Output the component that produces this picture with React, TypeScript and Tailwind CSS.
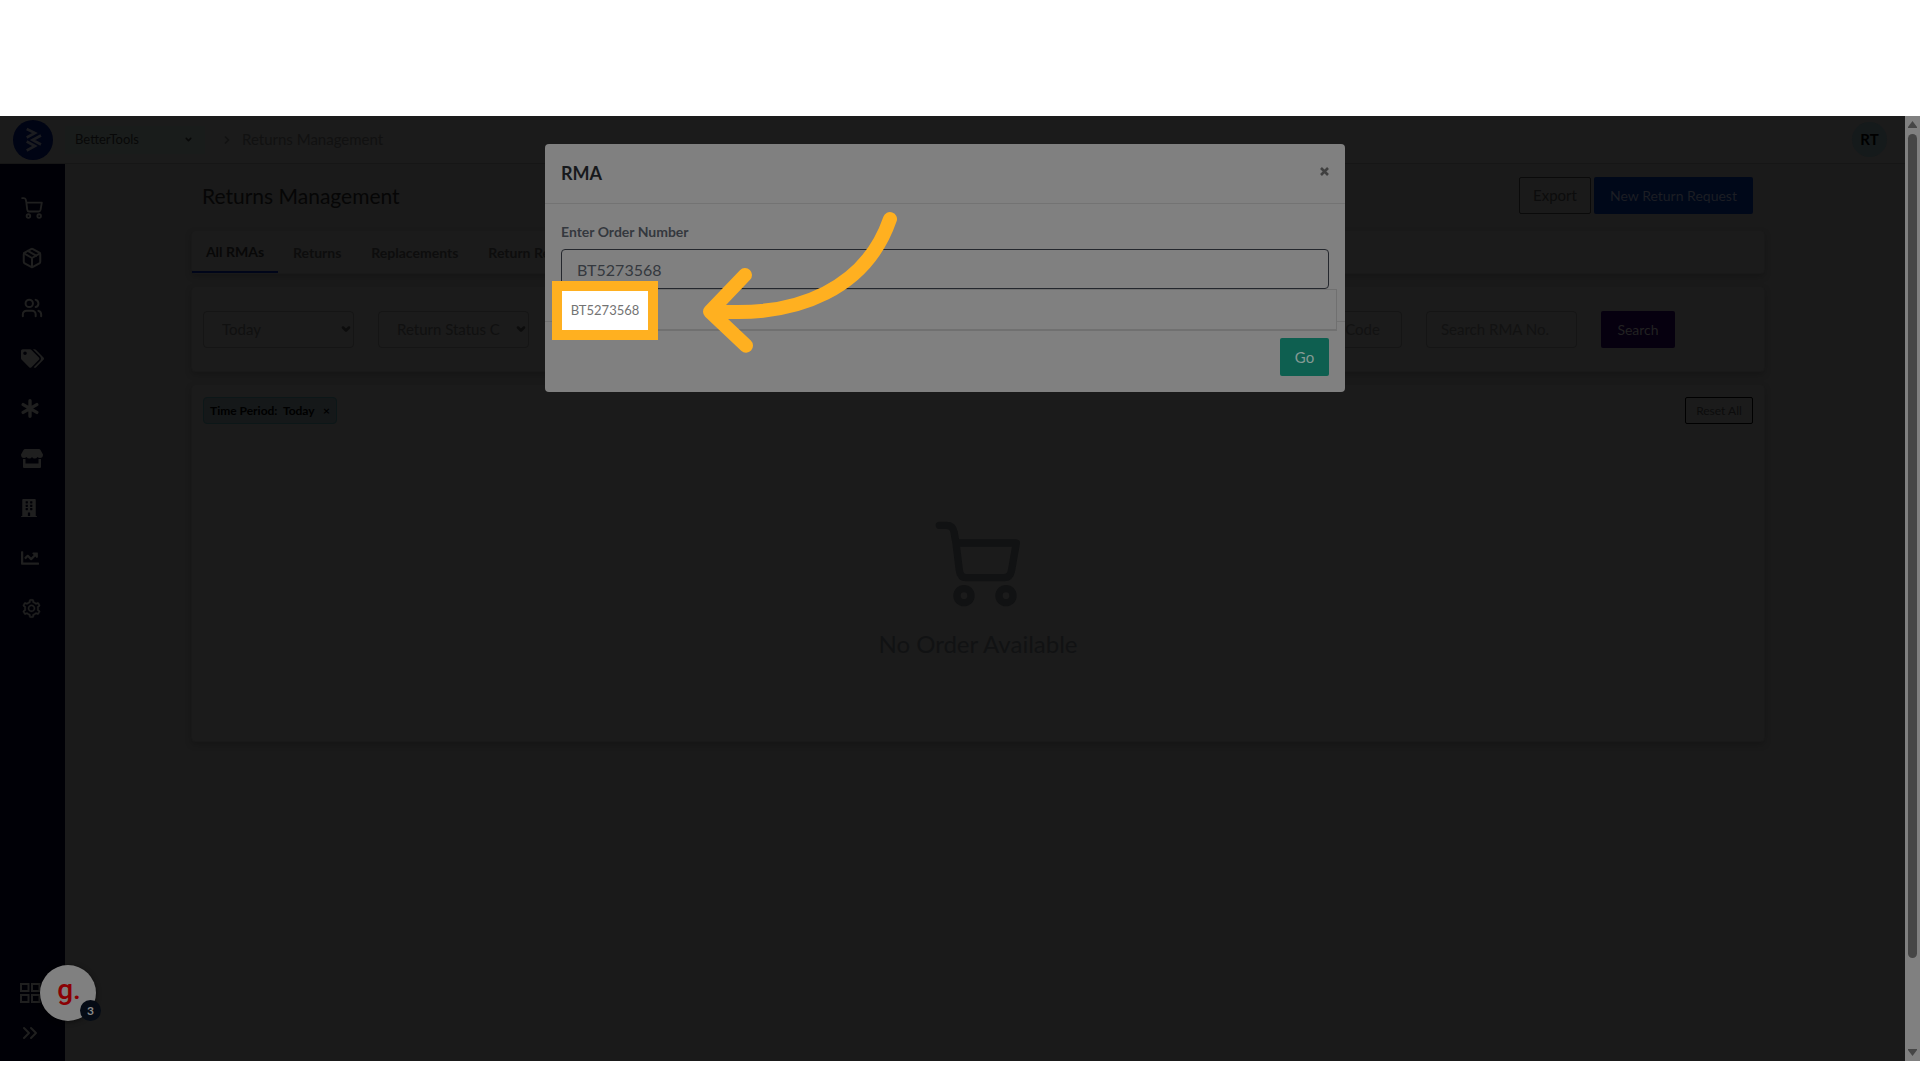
import type { ReactNode } from "react";
import { Package, Users, ChevronDown, ChevronRight, ChevronsRight } from "lucide-react";
import { FaTags, FaBuilding, FaChartLine } from "react-icons/fa";
import { AiOutlineSetting } from "react-icons/ai";

function CartIcon({ className }: { className: string }) {
  return (
    <svg viewBox="284 95 258 258" className={className} fill="none" stroke="currentColor" strokeWidth="22" strokeLinecap="round" strokeLinejoin="round" aria-hidden="true">
      <path d="M297 108H318Q338 108 341 128L347 161L357 243Q360 265 377 265H492Q509 265 513 246L528 161H347" />
      <circle cx="371" cy="319" r="21" />
      <circle cx="497" cy="319" r="21" />
    </svg>
  );
}

function AsteriskIcon() {
  return (
    <svg viewBox="0 0 18 19" className="h-[19px] w-[18px]" fill="none" stroke="currentColor" strokeWidth="3.4" strokeLinecap="round" aria-hidden="true">
      <path d="M9 1.800V17.200M2.200 5.600L15.800 13.400M15.800 5.600L2.200 13.400" />
    </svg>
  );
}

function StoreIcon() {
  return (
    <svg viewBox="0 0 22 19" className="h-[19px] w-[22px]" fill="currentColor" aria-hidden="true">
      <path d="M4 0H18Q19 0 19.500 1L22 5.500Q22 9 19 9Q17.500 9 16.500 8Q15.500 9.500 13.700 9.500Q12 9.500 11 8Q10 9.500 8.300 9.500Q6.500 9.500 5.500 8Q4.500 9 3 9Q0 9 0 5.500L2.500 1Q3 0 4 0Z" />
      <path d="M2 10H4.500V14.500H17.500V10H20V18Q20 19 19 19H3Q2 19 2 18Z" />
    </svg>
  );
}

function Logo() {
  return (
    <svg viewBox="0 0 40 40" className="size-10" aria-hidden="true">
      <circle cx="20" cy="20" r="20" fill="#000414" />
      <g fill="none" stroke="#1b1c20" strokeWidth="2.6">
        <path d="M13.700 9L22 13L13.700 17.500" />
        <path d="M28 15.500L19.500 20L28 24.500" />
        <path d="M13.700 21.500L22 26L13.700 30.500" />
      </g>
    </svg>
  );
}

function AppsIcon() {
  return (
    <svg viewBox="0 0 21 20" className="h-5 w-[21px]" fill="none" stroke="currentColor" strokeWidth="2" aria-hidden="true">
      <path d="M1 1H8.500V8H1ZM12 1H19.500V8H12ZM1 12H8.500V19H1ZM12 12H19.500V19H12Z" />
    </svg>
  );
}

const navItems: { label: string; icon: ReactNode }[] = [
  { label: "Orders", icon: <CartIcon className="size-[22px]" /> },
  { label: "Products", icon: <Package className="size-[22px]" strokeWidth={2.2} /> },
  { label: "Customers", icon: <Users className="size-[22px]" strokeWidth={2.2} /> },
  { label: "Offers", icon: <FaTags className="size-[23px]" /> },
  { label: "Integrations", icon: <AsteriskIcon /> },
  { label: "Store", icon: <StoreIcon /> },
  { label: "Company", icon: <FaBuilding className="h-[18px] w-4" /> },
  { label: "Reports", icon: <FaChartLine className="size-[18px]" /> },
  { label: "Settings", icon: <AiOutlineSetting className="size-[21px]" strokeWidth={20} /> },
];

function Sidebar() {
  return (
    <nav className="flex w-[65px] shrink-0 flex-col bg-[#000006] pt-[19px] pb-4 text-[#1f1f1f]">
      {navItems.map((item) => (
        <a key={item.label} href="#" aria-label={item.label} className="flex h-[50px] items-center pl-[21px]">
          {item.icon}
        </a>
      ))}
      <a href="#" aria-label="Apps" className="mt-auto pl-5">
        <AppsIcon />
      </a>
      <button type="button" aria-label="Expand menu" className="mt-[18px] pl-[18px]">
        <ChevronsRight className="size-6" />
      </button>
    </nav>
  );
}

function TopBar() {
  return (
    <header className="flex h-12 items-center border-b border-[#161616] bg-[#1b1b1b] pr-[18px] pl-[13px]">
      <a href="#" aria-label="Home">
        <Logo />
      </a>
      <button type="button" className="ml-3 flex h-7 w-[140px] items-center justify-between bg-[#191c1b] pr-3 pl-[10px] text-[13px] text-[#080808]">
        BetterTools
        <ChevronDown className="size-[9px]" strokeWidth={4} />
      </button>
      <ChevronRight className="ml-4 size-3 text-[#121212]" strokeWidth={3} />
      <span className="ml-[9px] text-[15px] text-[#111111]">Returns Management</span>
      <button type="button" className="ml-auto size-[35px] rounded-full bg-[#151a1b] text-[15px] font-bold text-black">
        RT
      </button>
    </header>
  );
}

function FilterSelect({ label, value }: { label: string; value: string }) {
  return (
    <div className="relative w-[151px]">
      <select aria-label={label} className="h-[37px] w-full appearance-none rounded border border-[#151515] bg-transparent pl-[18px] text-[15px] text-[#101010]">
        <option>{value}</option>
      </select>
      <ChevronDown className="pointer-events-none absolute top-3 right-[2px] size-3 text-[#0c0c0c]" strokeWidth={5} />
    </div>
  );
}

function FilterInput({ placeholder }: { placeholder: string }) {
  return (
    <input aria-label={placeholder} placeholder={placeholder} className="h-[37px] w-[151px] rounded border border-[#151515] bg-transparent px-[14px] text-[15px] placeholder:text-[#121212]" />
  );
}

const card = "rounded border border-[#191919] bg-[#1b1b1b] shadow-[0_3px_6px_rgba(0,0,0,0.18)]";

function Main() {
  return (
    <main className="min-w-0 flex-1 bg-[#1a1a1a] pr-[140px] pl-[126px]">
      <div className="flex h-[66px] items-start pt-[13px] pr-3 pl-[11px]">
        <h1 className="pt-[3px] text-[21px] leading-[32px] text-[#060606]">Returns Management</h1>
        <button type="button" className="ml-auto h-[37px] w-[72px] rounded-xs border border-[#0a0a0a] text-[15px] text-[#0c0c0c]">
          Export
        </button>
        <button type="button" className="ml-[3px] h-[37px] w-[159px] rounded-xs bg-[#000819] text-[14px] text-[#1c1e24]">
          New Return Request
        </button>
      </div>

      <div className={`${card} flex h-11 text-[14px] font-bold text-[#0d0d0d]`}>
        <a href="#" className="flex w-[86px] items-center justify-center border-b-2 border-[#000519] text-[#080808]">All RMAs</a>
        <a href="#" className="ml-[15px] flex items-center">Returns</a>
        <a href="#" className="ml-[30px] flex items-center">Replacements</a>
        <a href="#" className="ml-[30px] flex items-center">Return Requests</a>
      </div>

      <form className={`${card} mt-3 flex h-[86px] items-center justify-between pr-[89px] pl-[11px]`}>
        <div className="flex gap-6">
          <FilterSelect label="Time period" value="Today" />
          <FilterSelect label="Return status" value="Return Status C" />
        </div>
        <div className="flex gap-6">
          <FilterInput placeholder="Search Pick Code" />
          <FilterInput placeholder="Search RMA No." />
          <button type="button" className="h-[37px] w-[74px] rounded-xs bg-[#06000f] text-[14px] text-[#222222]">Search</button>
        </div>
      </form>

      <section className={`${card} mt-3 h-[358px] px-[11px] pt-3`}>
        <div className="flex items-start justify-between">
          <div className="flex h-[27px] w-[134px] items-center justify-between rounded border border-[#0c1718] bg-[#151819] px-[6px] text-[12px] font-bold text-black">
            <span className="whitespace-pre">Time Period:  Today</span>
            <button type="button" aria-label="Remove filter">×</button>
          </div>
          <button type="button" className="h-[27px] w-[68px] rounded-xs border border-black text-[12px] text-[#0c0c0c]">Reset All</button>
        </div>
        <div className="mt-[97px] flex flex-col items-center text-[#111213]">
          <CartIcon className="size-[86px]" />
          <p className="mt-[19px] text-[24px] leading-[36px]">No Order Available</p>
        </div>
      </section>
    </main>
  );
}

function ScrollBar() {
  return (
    <div className="flex w-[15px] shrink-0 flex-col items-center bg-[#808080] py-[5px] text-[#464646]" aria-hidden="true">
      <svg viewBox="0 0 9 7" className="h-[7px] w-[9px]" fill="currentColor"><path d="M4.500 0L9 6V7H0V6Z" /></svg>
      <div className="mt-[6px] mb-[91px] w-[9px] flex-1 rounded-full bg-[#464646]" />
      <svg viewBox="0 0 9 7" className="h-[7px] w-[9px]" fill="currentColor"><path d="M4.500 7L9 1V0H0V1Z" /></svg>
    </div>
  );
}

function RmaDialog() {
  return (
    <div className="absolute inset-x-0 top-0 flex justify-center pt-7 pr-[30px]">
      <div role="dialog" aria-labelledby="rma-title" className="relative w-[800px] rounded bg-[#808080]">
        <div className="flex h-[60px] items-center justify-between border-b border-[#737373] px-4">
          <h2 id="rma-title" className="text-[18px] font-bold text-[#17191c]">RMA</h2>
          <button type="button" aria-label="Close" className="pb-1 text-[#404040]">
            <svg viewBox="0 0 9 9" className="size-[9px]" stroke="currentColor" strokeWidth="2.600" aria-hidden="true">
              <path d="M1 1L8 8M8 1L1 8" />
            </svg>
          </button>
        </div>
        <div className="relative h-[118px] border-b border-[#737373] px-4 pt-4">
          <label htmlFor="order-number" className="block h-[29px] text-[14px] leading-[23px] font-bold text-[#34383e]">Enter Order Number</label>
          <input id="order-number" defaultValue="BT5273568" className="h-10 w-full rounded border border-[#24272d] bg-transparent px-[15px] text-base text-[#34383e]" />
          <ul className="absolute top-[85px] right-2 left-4 h-[42px] border border-b-2 border-[#707070] bg-[#808080]">
            <li className="absolute -top-[9px] -left-[10px] h-[59px] w-[106px] border-[10px] border-[#ffb020] bg-white">
              <button type="button" className="h-full w-full text-[13px] text-[#737373]">BT5273568</button>
            </li>
          </ul>
        </div>
        <div className="flex justify-end p-4">
          <button type="button" className="h-[38px] w-[49px] rounded-xs bg-[#0e5f50] text-[15px] text-[#859a95]">Go</button>
        </div>
        <svg viewBox="660 270 600 435" className="pointer-events-none absolute top-[66px] left-[155px] h-[145px] w-[200px]" fill="none" stroke="#ffb020" strokeWidth="42" strokeLinecap="round" strokeLinejoin="round" aria-hidden="true">
          <path d="M795 465L690 575L798 677M700 573C960 595 1160 500 1230 297" />
        </svg>
      </div>
    </div>
  );
}

function GuideBubble() {
  return (
    <button type="button" aria-label="Open guide" className="absolute bottom-10 left-10 flex size-14 items-center justify-center rounded-full bg-[#808080] shadow-[0_1px_5px_rgba(0,0,0,0.5)]">
      <span className="pb-[6px] pl-[2px] font-['Roboto',sans-serif] text-[28px] leading-8 font-medium text-[#8a0003]">g.</span>
      <span className="absolute -right-[5px] bottom-0 flex size-[21px] items-center justify-center rounded-full bg-[#050b15] text-xs font-bold text-[#8a8a8a]">3</span>
    </button>
  );
}

export default function App() {
  return (
    <div className="flex min-h-screen flex-col bg-white pt-[116px] pb-[19px] font-['Lato',sans-serif]">
      <div className="relative flex flex-1">
        <div className="flex min-w-0 flex-1 flex-col">
          <TopBar />
          <div className="flex flex-1">
            <Sidebar />
            <Main />
          </div>
        </div>
        <ScrollBar />
        <RmaDialog />
        <GuideBubble />
      </div>
    </div>
  );
}
